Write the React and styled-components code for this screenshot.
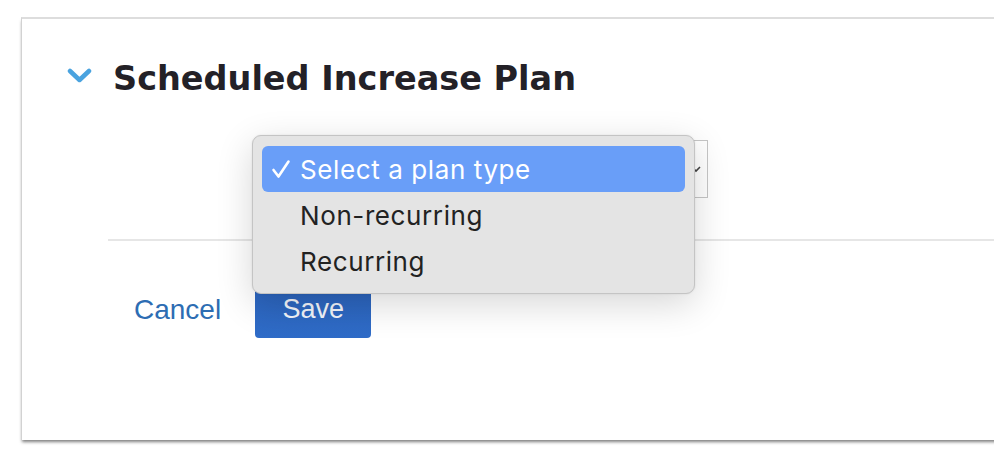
import React from "react";
import styled, { createGlobalStyle } from "styled-components";

const Global = createGlobalStyle`
  html, body { margin: 0; padding: 0; background: #ffffff; overflow: hidden; }
  body { font-family: "Liberation Sans", Arial, sans-serif; }
`;

const Page = styled.div`
  padding: 17px 0 0 21px;
  width: 994px;
  height: 454px;
  box-sizing: border-box;
`;

const Card = styled.section`
  width: 1100px;
  height: 423px;
  box-sizing: border-box;
  background: #fff;
  border-top: 2px solid #dddddd;
  border-left: 1px solid #d2d2d2;
  box-shadow: 0 3px 3px -1px rgba(0, 0, 0, 0.5);
`;

const Header = styled.div`
  display: flex;
  align-items: center;
  gap: 21px;
  padding: 40px 0 0 45px;
  height: 40px;
`;

const Chevron = styled.svg`
  width: 25px;
  height: 16px;
  flex: none;
  margin-top: -6px;
`;

const Title = styled.h2`
  margin: 0;
  font-family: "DejaVu Sans", Inter, sans-serif;
  font-weight: 700;
  font-size: 33.5px;
  line-height: 40px;
  color: #232127;
`;

const Body = styled.div`
  padding: 41px 0 0 86px;
`;

const FieldRow = styled.div`
  padding-left: 147px;
`;

const SelectWrap = styled.div`
  position: relative;
  width: 453px;
`;

const SelectBox = styled.div`
  height: 58px;
  box-sizing: border-box;
  border: 1.5px solid #c6c6c6;
  display: flex;
  align-items: center;
  justify-content: flex-end;
  padding-right: 6px;
`;

const Caret = styled.svg`
  width: 10px;
  height: 8px;
`;

const Menu = styled.ul`
  position: absolute;
  left: -3px;
  top: -5px;
  width: 443px;
  margin: 0;
  padding: 10px 9px 9px;
  box-sizing: border-box;
  list-style: none;
  background: #e4e4e4;
  border: 1px solid #c4c4c4;
  border-radius: 9px;
  box-shadow: 0 10px 36px rgba(0, 0, 0, 0.16), 0 0 2px rgba(0, 0, 0, 0.1);
  z-index: 10;
`;

const Option = styled.li`
  height: 46px;
  display: grid;
  grid-template-columns: 38px 1fr;
  align-items: center;
  border-radius: 6px;
  font-family: Inter, "Open Sans", sans-serif;
  font-size: 26px;
  letter-spacing: 0.6px;
  color: ${(p) => (p.$active ? "#ffffff" : "#222222")};
  background: ${(p) => (p.$active ? "#699ef8" : "transparent")};
`;

const CheckCell = styled.span`
  display: flex;
  align-items: center;
  padding-left: 9px;
`;

const CheckIcon = styled.svg`
  width: 20px;
  height: 20px;
`;

const Divider = styled.hr`
  margin: 41px 0 0 0;
  border: 0;
  height: 2px;
  background: #e6e6e6;
`;

const Actions = styled.div`
  display: flex;
  align-items: center;
  gap: 34px;
  padding: 40px 0 0 26px;
`;

const LinkButton = styled.button`
  background: none;
  border: 0;
  padding: 0;
  font-family: "Liberation Sans", Arial, sans-serif;
  font-size: 28px;
  color: #2d6db3;
  cursor: pointer;
`;

const PrimaryButton = styled.button`
  width: 116px;
  height: 57px;
  border: 0;
  border-radius: 4px;
  background: linear-gradient(#2b63bb, #2f6cc8);
  color: #f4f6fb;
  font-family: "Liberation Sans", Arial, sans-serif;
  font-size: 27px;
  cursor: pointer;
`;

export default function App() {
  const options = ["Select a plan type", "Non-recurring", "Recurring"];
  return (
    <>
      <Global />
      <Page>
        <Card>
          <Header>
            <Chevron viewBox="0 0 25 16">
              <path
                d="M3 3 L12.5 12 L22 3"
                fill="none"
                stroke="#4aa3df"
                strokeWidth="4.5"
                strokeLinecap="round"
                strokeLinejoin="round"
              />
            </Chevron>
            <Title>Scheduled Increase Plan</Title>
          </Header>
          <Body>
            <FieldRow>
              <SelectWrap>
                <SelectBox>
                  <Caret viewBox="0 0 10 8">
                    <path d="M1 2 L5 6 L9 2" fill="none" stroke="#444" strokeWidth="1.6" />
                  </Caret>
                </SelectBox>
                <Menu>
                  {options.map((o, i) => (
                    <Option key={o} $active={i === 0}>
                      <CheckCell>
                        {i === 0 && (
                          <CheckIcon viewBox="0 0 20 20">
                            <path
                              d="M2.5 11 L7.5 17.5 L17.5 2.5"
                              fill="none"
                              stroke="#ffffff"
                              strokeWidth="2.6"
                              strokeLinecap="round"
                              strokeLinejoin="round"
                            />
                          </CheckIcon>
                        )}
                      </CheckCell>
                      <span>{o}</span>
                    </Option>
                  ))}
                </Menu>
              </SelectWrap>
            </FieldRow>
            <Divider />
            <Actions>
              <LinkButton>Cancel</LinkButton>
              <PrimaryButton>Save</PrimaryButton>
            </Actions>
          </Body>
        </Card>
      </Page>
    </>
  );
}
